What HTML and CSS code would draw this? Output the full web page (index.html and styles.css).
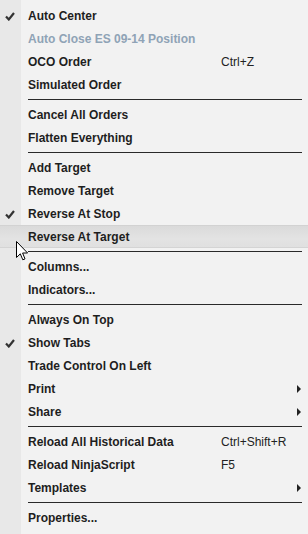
FILE: index.html
```html
<!DOCTYPE html>
<html>
<head>
<meta charset="utf-8">
<link rel="stylesheet" href="styles.css">
</head>
<body>
<div class="menu">
  <div class="item"><span class="check"><svg width="10" height="9" viewBox="0 0 10 9"><path d="M1 4.5 L3.8 7.5 L9 1" fill="none" stroke="#333" stroke-width="2.2"/></svg></span><span class="label">Auto Center</span></div>
  <div class="item disabled"><span class="check"></span><span class="label">Auto Close ES 09-14 Position</span></div>
  <div class="item"><span class="check"></span><span class="label">OCO Order</span><span class="key">Ctrl+Z</span></div>
  <div class="item"><span class="check"></span><span class="label">Simulated Order</span></div>
  <div class="sep"></div>
  <div class="item"><span class="check"></span><span class="label">Cancel All Orders</span></div>
  <div class="item"><span class="check"></span><span class="label">Flatten Everything</span></div>
  <div class="sep"></div>
  <div class="item"><span class="check"></span><span class="label">Add Target</span></div>
  <div class="item"><span class="check"></span><span class="label">Remove Target</span></div>
  <div class="item"><span class="check"><svg width="10" height="9" viewBox="0 0 10 9"><path d="M1 4.5 L3.8 7.5 L9 1" fill="none" stroke="#333" stroke-width="2.2"/></svg></span><span class="label">Reverse At Stop</span></div>
  <div class="item hover"><span class="check"></span><span class="label">Reverse At Target</span></div>
  <div class="sep"></div>
  <div class="item"><span class="check"></span><span class="label">Columns...</span></div>
  <div class="item"><span class="check"></span><span class="label">Indicators...</span></div>
  <div class="sep"></div>
  <div class="item"><span class="check"></span><span class="label">Always On Top</span></div>
  <div class="item"><span class="check"><svg width="10" height="9" viewBox="0 0 10 9"><path d="M1 4.5 L3.8 7.5 L9 1" fill="none" stroke="#333" stroke-width="2.2"/></svg></span><span class="label">Show Tabs</span></div>
  <div class="item"><span class="check"></span><span class="label">Trade Control On Left</span></div>
  <div class="item"><span class="check"></span><span class="label">Print</span><span class="key"></span><span class="arrow"></span></div>
  <div class="item"><span class="check"></span><span class="label">Share</span><span class="key"></span><span class="arrow"></span></div>
  <div class="sep"></div>
  <div class="item"><span class="check"></span><span class="label">Reload All Historical Data</span><span class="key">Ctrl+Shift+R</span></div>
  <div class="item"><span class="check"></span><span class="label">Reload NinjaScript</span><span class="key">F5</span></div>
  <div class="item"><span class="check"></span><span class="label">Templates</span><span class="key"></span><span class="arrow"></span></div>
  <div class="sep"></div>
  <div class="item"><span class="check"></span><span class="label">Properties...</span></div>
  <svg class="cursor" width="13" height="21" viewBox="0 0 13 21"><path d="M0.5 0.5 L0.5 16.5 L4.3 12.8 L6.8 18.8 L9 17.9 L6.6 12 L11.6 12 Z" fill="#fff" stroke="#000" stroke-width="1" stroke-linejoin="miter"/></svg>
</div>
</body>
</html>
```

FILE: styles.css
```css
html, body {
  margin: 0;
  padding: 0;
}
body {
  width: 308px;
  height: 534px;
  overflow: hidden;
  background: #f2f2f2;
}
.menu {
  position: relative;
  width: 308px;
  height: 534px;
  padding-top: 4px;
  box-sizing: border-box;
  background: linear-gradient(to right, #e8e8e8 21px, #f2f2f2 21px);
  font-family: "Liberation Sans", Arial, sans-serif;
  font-size: 12px;
  color: #1e1e1e;
}
.item {
  display: grid;
  grid-template-columns: 28px 193px 1fr 12px;
  align-items: center;
  height: 23px;
  box-sizing: border-box;
}
.label {
  font-weight: bold;
  white-space: nowrap;
}
.disabled .label {
  color: #8fa3b6;
}
.key {
  white-space: nowrap;
  color: #222;
}
.check {
  display: flex;
  align-items: center;
  padding-left: 5px;
  padding-top: 1px;
}
.arrow {
  width: 0;
  height: 0;
  border-top: 4px solid transparent;
  border-bottom: 4px solid transparent;
  border-left: 4px solid #222;
  margin-left: 1px;
}
.hover {
  background: linear-gradient(#dadada, #e3e3e3 60%, #e0e0e0);
  border-top: 1px solid #d2d2d2;
  border-bottom: 1px solid #d4d4d4;
}
.sep {
  height: 1px;
  background: #2a2a2a;
  margin: 3px 6px 3px 28px;
}
.cursor {
  position: absolute;
  left: 16px;
  top: 241px;
}
```
